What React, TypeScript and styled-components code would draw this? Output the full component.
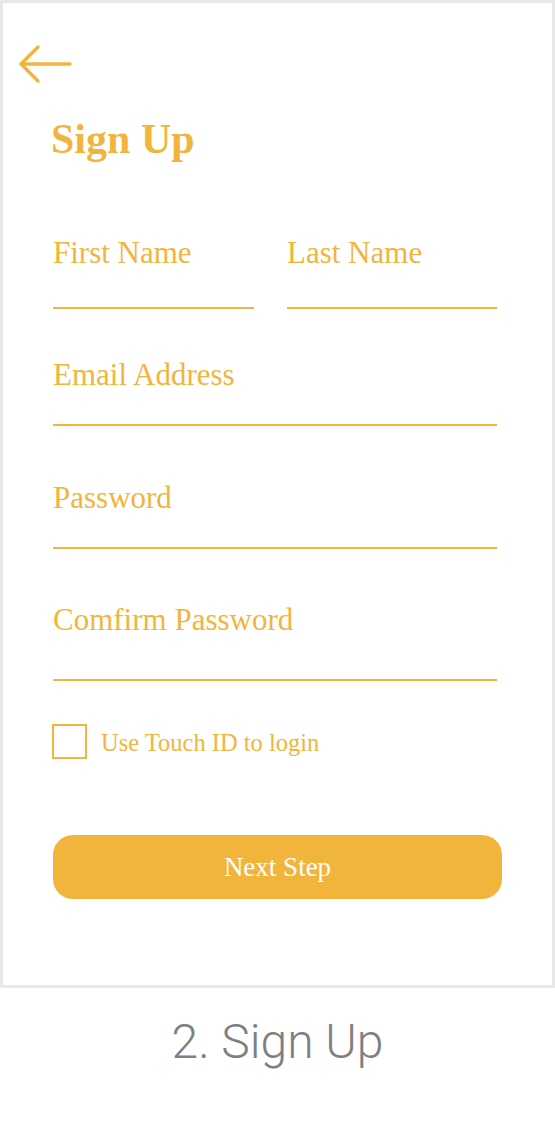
import styled, { createGlobalStyle } from 'styled-components';

const GOLD = '#f2b53c';

const GlobalStyle = createGlobalStyle`
  html, body {
    margin: 0;
    padding: 0;
    background: #ffffff;
  }
  body {
    font-family: 'Liberation Serif', 'Times New Roman', serif;
  }
`;

const Page = styled.div`
  width: 555px;
  height: 1139px;
  display: flex;
  flex-direction: column;
`;

const Frame = styled.section`
  box-sizing: border-box;
  width: 555px;
  height: 988px;
  border: 3px solid #e8e8e8;
  padding: 41px 55px 0 50px;
  display: flex;
  flex-direction: column;
  background: #ffffff;
`;

const BackButton = styled.button`
  appearance: none;
  background: transparent;
  border: 0;
  padding: 0;
  margin-left: -35px;
  width: 56px;
  height: 40px;
  cursor: pointer;

  svg {
    display: block;
  }
`;

const Title = styled.h1`
  margin: 31px 0 0 -2px;
  font-size: 42px;
  line-height: 48px;
  font-weight: 700;
  color: ${GOLD};
`;

const Row = styled.div`
  display: flex;
  gap: 33px;
  margin-top: 71px;
`;

const Field = styled.div<{ $top?: number; $width?: number }>`
  display: flex;
  flex-direction: column;
  flex: none;
  margin-top: ${(p) => p.$top ?? 0}px;
  ${(p) => (p.$width ? `width: ${p.$width}px;` : '')}
`;

const Label = styled.label`
  font-size: 31px;
  line-height: 36px;
  padding-top: 1px;
  color: ${GOLD};
  white-space: nowrap;
`;

const Underline = styled.div<{ $gap: number }>`
  height: ${(p) => p.$gap}px;
  border-bottom: 2px solid ${GOLD};
`;

const CheckRow = styled.label`
  display: flex;
  align-items: center;
  gap: 14px;
  margin: 42px 0 0 -1px;
  cursor: pointer;
`;

const Box = styled.span`
  box-sizing: border-box;
  width: 35px;
  height: 35px;
  border: 2px solid ${GOLD};
  flex: none;
`;

const CheckText = styled.span`
  font-size: 24.5px;
  line-height: 35px;
  margin-top: 2px;
  color: ${GOLD};
`;

const NextButton = styled.button`
  appearance: none;
  border: 0;
  margin-top: 75px;
  width: 449px;
  height: 64px;
  border-radius: 20px;
  background: ${GOLD};
  color: #ffffff;
  font-family: 'Liberation Serif', 'Times New Roman', serif;
  font-size: 27px;
  line-height: 64px;
  padding: 0;
  cursor: pointer;
`;

const Caption = styled.div`
  margin-top: 26px;
  text-align: center;
  font-family: Roboto, 'Liberation Sans', Arial, sans-serif;
  font-weight: 300;
  font-size: 48px;
  line-height: 56px;
  color: #7f7f7f;
`;

function BackArrow() {
  return (
    <svg width="56" height="40" viewBox="0 0 56 40" fill="none">
      <path
        d="M3 20 H52 M20 3 L3 20 L20 37"
        stroke={GOLD}
        strokeWidth="3.5"
        strokeLinecap="round"
        strokeLinejoin="round"
      />
    </svg>
  );
}

export default function App() {
  return (
    <>
      <GlobalStyle />
      <Page>
        <Frame>
          <BackButton aria-label="Back">
            <BackArrow />
          </BackButton>
          <Title>Sign Up</Title>
          <Row>
            <Field $width={201}>
              <Label>First Name</Label>
              <Underline $gap={36} />
            </Field>
            <Field $width={210}>
              <Label>Last Name</Label>
              <Underline $gap={36} />
            </Field>
          </Row>
          <Field $top={47}>
            <Label>Email Address</Label>
            <Underline $gap={31} />
          </Field>
          <Field $top={53}>
            <Label>Password</Label>
            <Underline $gap={31} />
          </Field>
          <Field $top={52}>
            <Label>Comfirm Password</Label>
            <Underline $gap={41} />
          </Field>
          <CheckRow>
            <Box />
            <CheckText>Use Touch ID to login</CheckText>
          </CheckRow>
          <NextButton>Next Step</NextButton>
        </Frame>
        <Caption>2. Sign Up</Caption>
      </Page>
    </>
  );
}
